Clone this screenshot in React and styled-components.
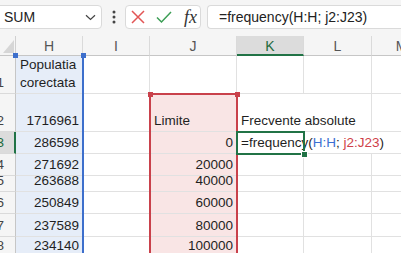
import React from "react";
import styled, { createGlobalStyle } from "styled-components";

const GlobalStyle = createGlobalStyle`
  html, body { margin: 0; padding: 0; background: #ffffff; overflow: hidden; }
  body { font-family: "Liberation Sans", Arial, sans-serif; }
  * { box-sizing: border-box; }
`;

const Page = styled.div`
  width: 401px;
  height: 253px;
  overflow: hidden;
  background: #ffffff;
`;

const Toolbar = styled.div`
  height: 36px;
  background: #f5f5f5;
  display: flex;
  align-items: flex-start;
  padding-top: 5px;
`;

const NameBox = styled.div`
  margin-left: -4px;
  width: 106px;
  height: 24px;
  background: #ffffff;
  border: 1px solid #dadada;
  border-radius: 4px;
  display: flex;
  align-items: center;
  justify-content: space-between;
  padding: 0 5px 0 7px;
  font-size: 14px;
  color: #222;
`;

const Dots = styled.div`
  width: 23px;
  height: 24px;
  display: flex;
  align-items: center;
  justify-content: center;
`;

const EditBox = styled.div`
  width: 76px;
  height: 24px;
  background: #ffffff;
  border: 1px solid #dadada;
  border-radius: 4px;
  display: flex;
  align-items: center;
  padding-left: 5px;
  gap: 11px;
`;

const Fx = styled.span`
  font-family: "Liberation Serif", "Times New Roman", serif;
  font-style: italic;
  font-size: 18px;
  color: #333;
  margin-left: 1px;
  line-height: 1;
`;

const FormulaInput = styled.div`
  margin-left: 6px;
  flex: 1;
  height: 24px;
  background: #ffffff;
  border: 1px solid #dadada;
  border-right: none;
  border-radius: 4px 0 0 4px;
  display: flex;
  align-items: center;
  padding-left: 11px;
  font-size: 14px;
  color: #222;
  white-space: nowrap;
`;

const Sheet = styled.div`
  position: relative;
  display: grid;
  grid-template-columns: 16px 67px 67px 87px 67px 68px 60px;
  grid-template-rows: 20px 38px 38px 22px 22px 16px 22px 23px 20px;
  font-size: 13.5px;
  color: #1f1f1f;
`;

const Corner = styled.div`
  background: #f5f5f5;
  border-right: 1px solid #d0d0d0;
  border-bottom: 1px solid #c6c6c6;
  display: flex;
  align-items: flex-end;
  justify-content: flex-end;
  padding: 0 1px 2px 0;
`;

const ColHeader = styled.div`
  background: ${(p) => (p.$active ? "#dcdcdc" : "#f5f5f5")};
  color: ${(p) => (p.$active ? "#1e6b3d" : "#555")};
  border-right: 1px solid #dadada;
  border-bottom: ${(p) => (p.$active ? "2px solid #217346" : "1px solid #c6c6c6")};
  display: flex;
  align-items: center;
  justify-content: center;
  font-size: 14px;
  padding-top: ${(p) => (p.$active ? "1px" : "0")};
`;

const RowHeader = styled.div`
  background: ${(p) => (p.$active ? "#dcdcdc" : "#f5f5f5")};
  color: ${(p) => (p.$active ? "#1e6b3d" : "#444")};
  border-right: ${(p) => (p.$active ? "2px solid #217346" : "1px solid #c6c6c6")};
  border-bottom: 1px solid #dadada;
  display: flex;
  align-items: flex-end;
  justify-content: flex-end;
  padding: 0 ${(p) => (p.$active ? "10px" : "11px")} 1px 0;
  line-height: 18px;
  white-space: nowrap;
  overflow: visible;
`;

const Cell = styled.div`
  background: ${(p) => p.$fill || "transparent"};
  border-right: ${(p) => (p.$open ? "none" : "1px solid #e1e1e1")};
  border-bottom: 1px solid #e1e1e1;
  display: flex;
  align-items: flex-end;
  justify-content: ${(p) => (p.$num ? "flex-end" : "flex-start")};
  padding: 0 3px 1px 4px;
  line-height: 18px;
  white-space: ${(p) => (p.$wrap ? "normal" : "nowrap")};
  overflow: visible;
  position: relative;
  z-index: ${(p) => (p.$open ? 2 : 0)};
`;

const Range = styled.div`
  position: absolute;
  grid-column: ${(p) => p.$col};
  grid-row: ${(p) => p.$row};
  top: ${(p) => (p.$top ? "-1px" : "0")};
  left: ${(p) => (p.$left ? "-1px" : "0")};
  right: -1px;
  bottom: ${(p) => (p.$bottom ? "-1px" : "0")};
  border-top: ${(p) => (p.$top ? `2px solid ${p.$color}` : "none")};
  border-left: ${(p) => (p.$left ? `2px solid ${p.$color}` : "none")};
  border-right: 2px solid ${(p) => p.$color};
  border-bottom: ${(p) => (p.$bottom ? `2px solid ${p.$color}` : "none")};
  z-index: 3;
  pointer-events: none;
`;

const Handle = styled.span`
  position: absolute;
  width: 5px;
  height: 5px;
  background: ${(p) => p.$color};
  top: ${(p) => (p.$bottom ? "auto" : "-3px")};
  bottom: ${(p) => (p.$bottom ? "-4px" : "auto")};
  left: ${(p) => (p.$side === "left" ? "-3px" : "auto")};
  right: ${(p) => (p.$side === "right" ? "-4px" : "auto")};
  outline: ${(p) => (p.$bottom ? "1px solid #ffffff" : "none")};
`;

const FormulaText = styled.span`
  white-space: pre;
`;
const RefBlue = styled.span`
  color: #3b6fd2;
`;
const RefRed = styled.span`
  color: #cf3f4a;
`;

const BLUE_FILL = "#e6edf8";
const RED_FILL = "#f9e5e5";

const hValues = ["1716961", "286598", "271692", "263688", "250849", "237589", "234140"];
const jValues = ["Limite", "0", "20000", "40000", "60000", "80000", "100000"];
const columns = ["H", "I", "J", "K", "L", "M"];

function ChevronDown() {
  return (
    <svg width="11" height="7" viewBox="0 0 11 7">
      <path d="M1 1.2 L5.5 5.5 L10 1.2" fill="none" stroke="#444" strokeWidth="1.2" />
    </svg>
  );
}

function VDots() {
  return (
    <svg width="4" height="14" viewBox="0 0 4 14">
      <circle cx="2" cy="2" r="1.5" fill="#444" />
      <circle cx="2" cy="7" r="1.5" fill="#444" />
      <circle cx="2" cy="12" r="1.5" fill="#444" />
    </svg>
  );
}

function CancelIcon() {
  return (
    <svg width="14" height="14" viewBox="0 0 14 14">
      <path d="M1 1 L13 13 M13 1 L1 13" stroke="#e25555" strokeWidth="1.5" fill="none" />
    </svg>
  );
}

function CheckIcon() {
  return (
    <svg width="16" height="14" viewBox="0 0 16 14">
      <path d="M1 7.5 L5.5 12 L15 2" stroke="#3c9e55" strokeWidth="1.5" fill="none" />
    </svg>
  );
}

function CornerTriangle() {
  return (
    <svg width="11" height="13" viewBox="0 0 11 13">
      <polygon points="11,0 11,13 0,13" fill="#d6d6d6" />
    </svg>
  );
}

function Formula() {
  return (
    <FormulaText>
      =frequency(<RefBlue>H:H</RefBlue>; <RefRed>j2:J23</RefRed>)
    </FormulaText>
  );
}

export default function App() {
  const rows = [];
  rows.push(
    <React.Fragment key="r1">
      <RowHeader>1</RowHeader>
      <Cell $fill={BLUE_FILL} $wrap>
        Populatia corectata
      </Cell>
      <Cell />
      <Cell />
      <Cell />
      <Cell />
      <Cell />
    </React.Fragment>
  );
  for (let i = 0; i < 7; i++) {
    const r = i + 2;
    const isJText = i === 0;
    let kContent = null;
    if (r === 2) kContent = "Frecvente absolute";
    if (r === 3) kContent = <Formula />;
    rows.push(
      <React.Fragment key={"r" + r}>
        <RowHeader $active={r === 3}>{r}</RowHeader>
        <Cell $fill={BLUE_FILL} $num>
          {hValues[i]}
        </Cell>
        <Cell />
        <Cell $fill={RED_FILL} $num={!isJText}>
          {jValues[i]}
        </Cell>
        <Cell $open={r === 2 || r === 3}>{kContent}</Cell>
        <Cell $open={r === 3} />
        <Cell />
      </React.Fragment>
    );
  }

  return (
    <Page>
      <GlobalStyle />
      <Toolbar>
        <NameBox>
          <span>SUM</span>
          <ChevronDown />
        </NameBox>
        <Dots>
          <VDots />
        </Dots>
        <EditBox>
          <CancelIcon />
          <CheckIcon />
          <Fx>fx</Fx>
        </EditBox>
        <FormulaInput>=frequency(H:H; j2:J23)</FormulaInput>
      </Toolbar>
      <Sheet>
        <Corner>
          <CornerTriangle />
        </Corner>
        {columns.map((c) => (
          <ColHeader key={c} $active={c === "K"}>
            {c}
          </ColHeader>
        ))}
        {rows}
        <Range $col="2 / 3" $row="2 / -1" $color="#3d6fcc">
          <Handle $color="#3d6fcc" $side="left" />
          <Handle $color="#3d6fcc" $side="right" />
        </Range>
        <Range $col="4 / 5" $row="3 / -1" $color="#c9414b" $top $left>
          <Handle $color="#c9414b" $side="left" />
          <Handle $color="#c9414b" $side="right" />
        </Range>
        <Range $col="5 / 6" $row="4 / 5" $color="#217346" $top $left $bottom>
          <Handle $color="#217346" $side="right" $bottom />
        </Range>
      </Sheet>
    </Page>
  );
}
